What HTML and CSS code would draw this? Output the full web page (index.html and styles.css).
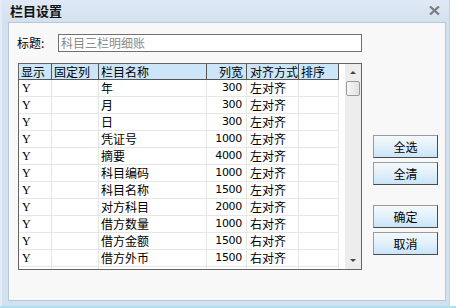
FILE: index.html
```html
<!DOCTYPE html>
<html lang="zh-CN">
<head>
  <meta charset="UTF-8">
  <title>栏目设置</title>
  <link rel="stylesheet" href="styles.css">
</head>
<body>
  <div class="dialog">
    <div class="titlebar">
      <span class="title">栏目设置</span>
      <span class="close">
        <svg width="11" height="9" viewBox="0 0 11 9">
          <path d="M1 0.5 L10 8.5 M10 0.5 L1 8.5" stroke="#7d7d7d" stroke-width="2.2" fill="none"/>
        </svg>
      </span>
    </div>
    <div class="content">
      <div class="title-row">
        <label>标题:</label>
        <div class="input">科目三栏明细账</div>
      </div>
      <div class="main">
        <div class="grid">
          <div class="grid-body">
            <div class="rows">
              <div class="row head">
                <div class="c">显示</div>
                <div class="c">固定列</div>
                <div class="c">栏目名称</div>
                <div class="c num">列宽</div>
                <div class="c">对齐方式</div>
                <div class="c">排序</div>
              </div>
              <div class="row"><div class="c y">Y</div><div class="c"></div><div class="c">年</div><div class="c num">300</div><div class="c">左对齐</div><div class="c"></div></div>
              <div class="row"><div class="c y">Y</div><div class="c"></div><div class="c">月</div><div class="c num">300</div><div class="c">左对齐</div><div class="c"></div></div>
              <div class="row"><div class="c y">Y</div><div class="c"></div><div class="c">日</div><div class="c num">300</div><div class="c">左对齐</div><div class="c"></div></div>
              <div class="row"><div class="c y">Y</div><div class="c"></div><div class="c">凭证号</div><div class="c num">1000</div><div class="c">左对齐</div><div class="c"></div></div>
              <div class="row"><div class="c y">Y</div><div class="c"></div><div class="c">摘要</div><div class="c num">4000</div><div class="c">左对齐</div><div class="c"></div></div>
              <div class="row"><div class="c y">Y</div><div class="c"></div><div class="c">科目编码</div><div class="c num">1000</div><div class="c">左对齐</div><div class="c"></div></div>
              <div class="row"><div class="c y">Y</div><div class="c"></div><div class="c">科目名称</div><div class="c num">1500</div><div class="c">左对齐</div><div class="c"></div></div>
              <div class="row"><div class="c y">Y</div><div class="c"></div><div class="c">对方科目</div><div class="c num">2000</div><div class="c">左对齐</div><div class="c"></div></div>
              <div class="row"><div class="c y">Y</div><div class="c"></div><div class="c">借方数量</div><div class="c num">1000</div><div class="c">右对齐</div><div class="c"></div></div>
              <div class="row"><div class="c y">Y</div><div class="c"></div><div class="c">借方金额</div><div class="c num">1500</div><div class="c">右对齐</div><div class="c"></div></div>
              <div class="row"><div class="c y">Y</div><div class="c"></div><div class="c">借方外币</div><div class="c num">1500</div><div class="c">右对齐</div><div class="c"></div></div>
              <div class="row"><div class="c y">Y</div><div class="c"></div><div class="c">借方单价</div><div class="c num">1500</div><div class="c">右对齐</div><div class="c"></div></div>
            </div>
            <div class="scrollbar">
              <div class="arrow up"></div>
              <div class="thumb"></div>
              <div class="track"></div>
              <div class="arrow down"></div>
            </div>
          </div>
        </div>
        <div class="buttons">
          <button class="btn">全选</button>
          <button class="btn">全清</button>
          <button class="btn gap">确定</button>
          <button class="btn">取消</button>
        </div>
      </div>
    </div>
  </div>
  <div class="taskline"></div>
</body>
</html>
```

FILE: styles.css
```css
body {
  margin: 0;
  padding: 0;
  background: #ffffff;
  font-family: "Noto Sans CJK SC", "DejaVu Sans", sans-serif;
  font-size: 12px;
  color: #000;
  width: 456px;
  height: 308px;
  overflow: hidden;
}
.dialog {
  width: 450px;
  height: 306px;
  box-sizing: border-box;
  background: #d3e1ef;
  border-left: 2px solid #e4edf7;
  border-right: 1px solid #c2d3e5;
  padding: 0 3px 5px 6px;
  display: flex;
  flex-direction: column;
}
.titlebar {
  height: 22px;
  margin-left: -6px;
  margin-right: -3px;
  padding: 0 9px 0 8px;
  background: linear-gradient(#dfe9f5, #d3e1ef);
  display: flex;
  align-items: center;
  justify-content: space-between;
}
.title {
  font-size: 13px;
  font-weight: bold;
  line-height: 22px;
  color: #111;
}
.close {
  display: flex;
  width: 11px;
  height: 9px;
  margin-top: -2px;
}
.content {
  flex: 1;
  background: #f8f8f8;
  border: 1px solid #b6c8dc;
  padding: 11px 0 0 8px;
}
.title-row {
  display: flex;
  align-items: center;
  height: 18px;
}
.title-row label {
  width: 41px;
  line-height: 18px;
}
.input {
  width: 304px;
  height: 18px;
  box-sizing: border-box;
  border: 1px solid #707070;
  background: #fff;
  color: #8a8a8a;
  padding-left: 2px;
  line-height: 16px;
}
.main {
  display: flex;
  margin-top: 11px;
  margin-left: 1px;
}
.grid {
  width: 344px;
  height: 207px;
  box-sizing: border-box;
  border: 1px solid #646464;
  background: #fff;
  overflow: hidden;
}
.grid-body {
  display: flex;
  height: 100%;
}
.rows {
  width: 326px;
  overflow: hidden;
}
.row {
  display: grid;
  grid-template-columns: 33px 47px 108px 40px 52px 40px;
  width: 320px;
  height: 17px;
}
.c {
  box-sizing: border-box;
  border-right: 1px solid #e6e6e6;
  border-bottom: 1px solid #e6e6e6;
  padding-left: 2px;
  line-height: 16px;
  white-space: nowrap;
  overflow: hidden;
}
.c.y {
  font-family: "Liberation Serif", serif;
  font-size: 12px;
  padding-left: 3px;
}
.c.num {
  text-align: right;
  padding-right: 4px;
  font-family: "DejaVu Sans", sans-serif;
  font-size: 11px;
  letter-spacing: -0.3px;
}
.row .c:nth-child(5) {
  padding-left: 3px;
}
.row.head {
  height: 16px;
}
.row.head .c {
  background: #cce5f8;
  border-right-color: #555;
  border-bottom-color: #555;
  line-height: 15px;
  font-family: "Noto Sans CJK SC", sans-serif;
  font-size: 12px;
  letter-spacing: 0;
}
.row.head .c.num {
  padding-right: 3px;
}
.scrollbar {
  width: 16px;
  background: #ededed;
  display: flex;
  flex-direction: column;
  align-items: center;
}
.arrow {
  width: 0;
  height: 0;
  border-left: 3px solid transparent;
  border-right: 3px solid transparent;
}
.arrow.up {
  margin-top: 7px;
  margin-bottom: 7px;
  border-bottom: 3px solid #444;
}
.arrow.down {
  margin-bottom: 7px;
  border-top: 3px solid #444;
}
.thumb {
  width: 14px;
  height: 15px;
  box-sizing: border-box;
  border: 1px solid #9a9a9a;
  border-radius: 2px;
  background: linear-gradient(90deg, #f6f6f6, #e2e2e2);
}
.track {
  flex: 1;
}
.buttons {
  display: flex;
  flex-direction: column;
  gap: 4px;
  margin-left: 11px;
  padding-top: 72px;
}
.btn {
  width: 65px;
  height: 23px;
  padding: 0;
  font-family: "Noto Sans CJK SC", sans-serif;
  font-size: 12px;
  color: #000;
  border: 1px solid #9a9a9a;
  border-right-color: #4a4a4a;
  border-bottom-color: #4a4a4a;
  background: linear-gradient(#f3f9fd, #e4f1fb 45%, #c9e4f8);
  line-height: 20px;
}
.btn.gap {
  margin-top: 16px;
}
.taskline {
  height: 2px;
  background: #a9e2f2;
}
```
